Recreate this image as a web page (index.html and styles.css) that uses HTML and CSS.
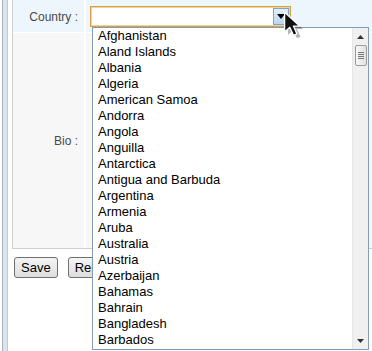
FILE: index.html
```html
<!DOCTYPE html>
<html lang="en">
<head>
    <meta charset="UTF-8">
    <title>Profile form</title>
    <link rel="stylesheet" href="styles.css">
</head>
<body>

<div class="screen">
    <div class="side"></div>
    <div class="main">
        <div class="panel">
            <div class="row row-country">
                <div class="label">Country :</div>
                <div class="value">
                    <div class="select">
                        <span class="select-btn">
                            <svg width="8" height="5" viewBox="0 0 8 5"><path d="M0 0h8L4 5z" fill="#000"/></svg>
                        </span>
                    </div>
                </div>
            </div>
            <div class="row row-bio">
                <div class="label">Bio :</div>
                <div class="value"></div>
            </div>
        </div>
        <div class="actions">
            <button class="btn">Save</button>
            <button class="btn">Rel</button>
        </div>
    </div>
</div>

<!-- open list of the country select -->
<div class="dropdown">
    <ul class="options">
        <li>Afghanistan</li>
        <li>Aland Islands</li>
        <li>Albania</li>
        <li>Algeria</li>
        <li>American Samoa</li>
        <li>Andorra</li>
        <li>Angola</li>
        <li>Anguilla</li>
        <li>Antarctica</li>
        <li>Antigua and Barbuda</li>
        <li>Argentina</li>
        <li>Armenia</li>
        <li>Aruba</li>
        <li>Australia</li>
        <li>Austria</li>
        <li>Azerbaijan</li>
        <li>Bahamas</li>
        <li>Bahrain</li>
        <li>Bangladesh</li>
        <li>Barbados</li>
    </ul>
    <div class="scrollbar">
        <span class="arrow">
            <svg width="7" height="4" viewBox="0 0 7 4"><path d="M3.5 0L7 4H0z" fill="#333"/></svg>
        </span>
        <span class="thumb"><i></i><i></i><i></i><i></i></span>
        <span class="spacer"></span>
        <span class="arrow">
            <svg width="7" height="4" viewBox="0 0 7 4"><path d="M0 0h7L3.5 4z" fill="#333"/></svg>
        </span>
    </div>
</div>

<svg class="cursor" width="26" height="30" viewBox="0 0 22 26">
    <path d="M3 3v17l4.5-4 3.2 7 3-1.3-3.1-6.8H16z" fill="#000" opacity="0.3" transform="translate(2 1.5)"/>
    <path d="M2 2v17l4.5-4 3.2 7 3-1.3-3.1-6.8H15z" fill="#111" stroke="#fff" stroke-width="1.1" stroke-linejoin="round"/>
</svg>

</body>
</html>
```

FILE: styles.css
```css
* {
    box-sizing: border-box;
    margin: 0;
    padding: 0;
}

body {
    font-family: 'Liberation Sans', Arial, sans-serif;
    background-color: #fff;
    color: #000;
    overflow: hidden;
}

.screen {
    display: flex;
    height: 351px;
}

.side {
    width: 6px;
    margin-left: 2px;
    margin-right: 4px;
    background-color: #dce4ee;
    border-left: 1px solid #a9b1ba;
    border-right: 1px solid #c3c9d0;
}

.main {
    flex: 1;
    overflow: hidden;
}

.panel {
    margin-right: -20px;
    border: 1px solid #cfcfcf;
    border-top: none;
}

.row {
    display: flex;
}

.row-country {
    height: 33px;
    background-color: #eef6fd;
    border-bottom: 1px solid #fff;
}

.row-bio {
    height: 215px;
    background-color: #f7f7f7;
}

.label {
    width: 73px;
    padding-right: 6px;
    border-right: 2px solid #fff;
    font-size: 12px;
    color: #4a4a4a;
    text-align: right;
    display: flex;
    align-items: center;
    justify-content: flex-end;
}

.row-country .label {
    align-items: flex-start;
    padding-top: 10px;
}

.value {
    flex: 1;
    padding: 6px 4px 0;
}

.select {
    width: 201px;
    height: 21px;
    background-color: #fff;
    border: 1px solid #d9a143;
    box-shadow: inset 0 0 0 1px #f2d499;
    display: flex;
    justify-content: flex-end;
    padding: 1px;
}

.select-btn {
    width: 16px;
    height: 17px;
    border: 1px solid #7ea4c9;
    background: linear-gradient(#e3effb, #b8d5f1);
    display: flex;
    align-items: center;
    justify-content: center;
}

.actions {
    display: flex;
    gap: 10px;
    padding-left: 2px;
    margin-top: 8px;
}

.btn {
    height: 21px;
    padding: 0 6px;
    font-family: 'Liberation Sans', Arial, sans-serif;
    font-size: 13px;
    color: #000;
    border: 1px solid #707070;
    border-radius: 3px;
    background: linear-gradient(#f4f4f4, #dedede);
}

.dropdown {
    position: absolute;
    left: 92px;
    top: 27px;
    width: 277px;
    height: 323px;
    background-color: #fff;
    border: 1px solid #7f9db9;
    display: flex;
}

.options {
    flex: 1;
    list-style: none;
    font-size: 13px;
    line-height: 16px;
    padding-left: 5px;
}

.scrollbar {
    width: 16px;
    background-color: #f0f0f0;
    border-left: 1px solid #e6e6e6;
    display: flex;
    flex-direction: column;
    align-items: center;
}

.arrow {
    height: 17px;
    display: flex;
    align-items: center;
    justify-content: center;
}

.thumb {
    width: 12px;
    height: 21px;
    border: 1px solid #9c9c9c;
    border-radius: 2px;
    background: linear-gradient(to right, #f8f8f8, #e2e2e2);
    display: flex;
    flex-direction: column;
    align-items: center;
    justify-content: center;
    gap: 1px;
}

.thumb i {
    width: 6px;
    height: 1px;
    background-color: #777;
}

.spacer {
    flex: 1;
}

.cursor {
    position: absolute;
    left: 282px;
    top: 10px;
}
```
